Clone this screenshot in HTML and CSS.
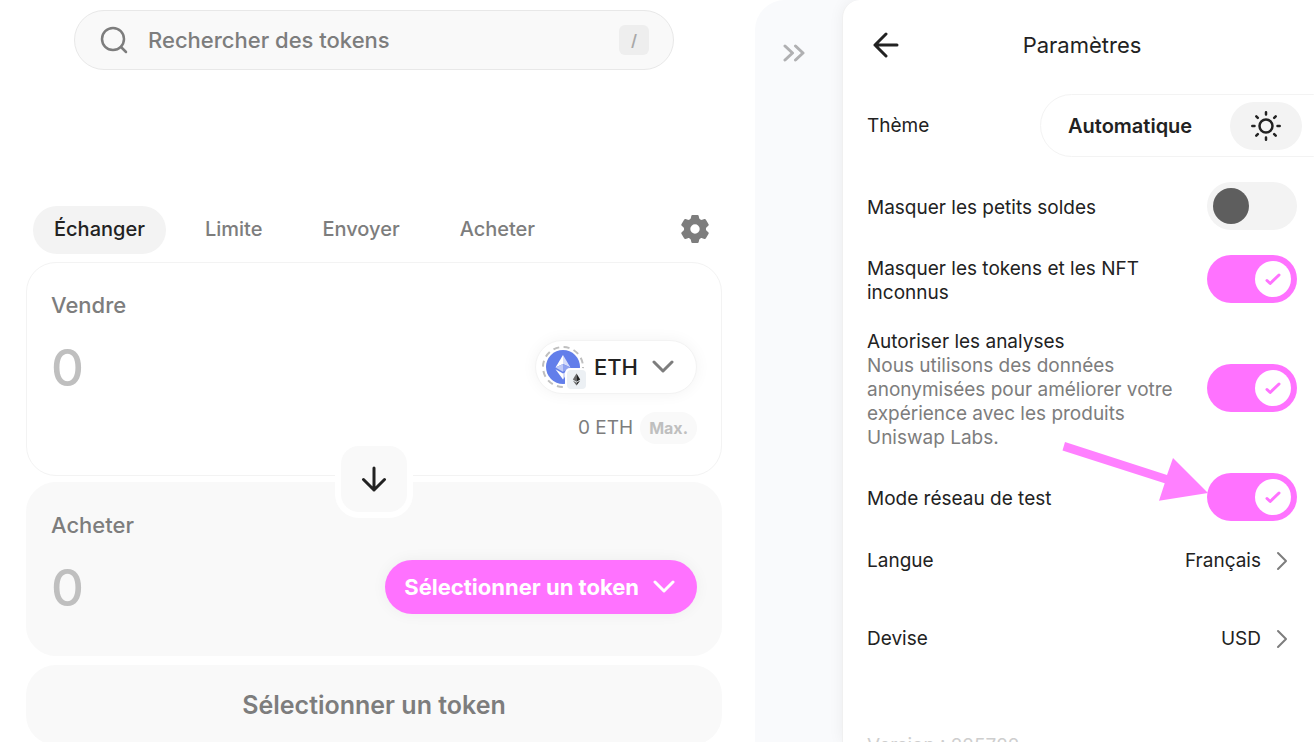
FILE: index.html
```html
<!DOCTYPE html>
<html lang="fr">
<head>
    <meta charset="UTF-8">
    <meta name="viewport" content="width=device-width, initial-scale=1.0">
    <title>Échanger</title>
    <link rel="stylesheet" href="styles.css">
</head>
<body>

    <main class="swap-page">
        <label class="search">
            <svg class="search-icon" width="28" height="28" viewBox="0 0 28 28" fill="none" stroke="#7d7d7d" stroke-width="2.500" stroke-linecap="round">
                <circle cx="13" cy="13" r="11"/>
                <path d="M21 21l5 5"/>
            </svg>
            <input type="text" placeholder="Rechercher des tokens" aria-label="Rechercher des tokens">
            <kbd>/</kbd>
        </label>

        <nav class="tabs">
            <button class="tab active">Échanger</button>
            <button class="tab">Limite</button>
            <button class="tab">Envoyer</button>
            <button class="tab">Acheter</button>
            <button class="gear" aria-label="Réglages">
                <svg width="28" height="28" viewBox="0 0 28 28">
                    <path fill="#7d7d7d" fill-rule="evenodd" d="M11.4 0h5.2c.6 0 1 .4 1.100 1l.5 2.300c.2.6.7 1 1.200 1.300.6.3 1.200.4 1.800.2l2.200-.7c.6-.2 1.200 0 1.500.6l2.700 4.600c.3.5.2 1.100-.3 1.500l-1.700 1.500c-.5.5-.7 1.100-.7 1.700s.2 1.200.7 1.700l1.700 1.500c.5.4.6 1 .3 1.500l-2.700 4.600c-.3.6-.9.8-1.500.6l-2.200-.7c-.6-.2-1.200-.1-1.800.2-.5.3-1 .7-1.200 1.300l-.5 2.300c-.1.6-.5 1-1.100 1h-5.200c-.6 0-1-.4-1.100-1l-.5-2.300c-.2-.6-.7-1-1.200-1.300-.6-.3-1.200-.4-1.800-.2l-2.200.7c-.6.2-1.200 0-1.500-.6L.400 18.700c-.3-.5-.2-1.100.3-1.500l1.700-1.500c.5-.5.7-1.100.7-1.700s-.2-1.200-.7-1.700L.700 10.800c-.5-.4-.6-1-.3-1.500l2.700-4.600c.3-.6.9-.8 1.500-.6l2.200.7c.6.2 1.200.1 1.800-.2.5-.3 1-.7 1.200-1.300l.5-2.300c.1-.6.5-1 1.100-1zM14 9.300a4.700 4.700 0 1 0 0 9.400 4.700 4.700 0 0 0 0-9.400z"/>
                </svg>
            </button>
        </nav>

        <section class="card sell">
            <label class="card-label" for="sell">Vendre</label>
            <div class="card-row">
                <input class="amount" id="sell" type="text" placeholder="0">
                <button class="token">
                    <svg width="48" height="48" viewBox="0 0 48 48">
                        <circle cx="24" cy="24" r="20" fill="none" stroke="#bfbfbf" stroke-width="2" stroke-dasharray="6 4.470"/>
                        <circle cx="24" cy="24" r="17" fill="#627eea"/>
                        <path fill="#fff" d="M24 12l-7.500 12.400L24 21z"/>
                        <path fill="#d5dcf9" d="M24 12l7.500 12.400L24 21z"/>
                        <path fill="#c0cbf7" d="M24 21l-7.500 3.400L24 28.800z"/>
                        <path fill="#90a3f0" d="M24 21l7.500 3.400L24 28.800z"/>
                        <path fill="#fff" d="M16.500 26.200L24 36.500v-6z"/>
                        <path fill="#d5dcf9" d="M31.500 26.200L24 36.500v-6z"/>
                        <rect x="26" y="25" width="22" height="22" rx="5" fill="#fff"/>
                        <rect x="28" y="27" width="19" height="19" rx="4" fill="#ecf0f4"/>
                        <path fill="#6b6b6b" d="M37.500 30.500l-3.700 6 3.700 2.200z"/>
                        <path fill="#222" d="M37.500 30.500l3.700 6-3.700 2.200z"/>
                        <path fill="#6b6b6b" d="M33.800 37.500l3.700 5v-2.800z"/>
                        <path fill="#222" d="M41.200 37.500l-3.700 5v-2.800z"/>
                    </svg>
                    <span>ETH</span>
                    <svg width="22" height="14" viewBox="0 0 22 14" fill="none" stroke="#7d7d7d" stroke-width="3" stroke-linecap="round" stroke-linejoin="round">
                        <path d="M2 2l9 9 9-9"/>
                    </svg>
                </button>
            </div>
            <div class="balance">
                <span>0 ETH</span>
                <button class="max">Max.</button>
            </div>
        </section>

        <div class="switch-row">
            <button class="switch" aria-label="Inverser">
                <svg width="26" height="26" viewBox="0 0 26 26" fill="none" stroke="#222" stroke-width="3" stroke-linecap="round" stroke-linejoin="round">
                    <path d="M13 2v22M2.500 13.500L13 24l10.500-10.500"/>
                </svg>
            </button>
        </div>

        <section class="card buy">
            <label class="card-label" for="buy">Acheter</label>
            <div class="card-row">
                <input class="amount" id="buy" type="text" placeholder="0">
                <button class="token pink">
                    <span>Sélectionner un token</span>
                    <svg width="22" height="14" viewBox="0 0 22 14" fill="none" stroke="#fff" stroke-width="3" stroke-linecap="round" stroke-linejoin="round">
                        <path d="M2 2l9 9 9-9"/>
                    </svg>
                </button>
            </div>
        </section>

        <button class="cta">Sélectionner un token</button>
    </main>

    <aside class="drawer">
        <button class="collapse" aria-label="Fermer">
            <svg width="22" height="18" viewBox="0 0 22 18" fill="none" stroke="#b0b0b2" stroke-width="3" stroke-linecap="round" stroke-linejoin="round">
                <path d="M2 2l7.500 7L2 16M12.500 2l7.500 7-7.500 7"/>
            </svg>
        </button>

        <div class="panel">
            <header class="panel-header">
                <button class="back" aria-label="Retour">
                    <svg width="26" height="26" viewBox="0 0 26 26" fill="none" stroke="#222" stroke-width="3" stroke-linecap="round" stroke-linejoin="round">
                        <path d="M24 13H2M13 2L2 13l11 11"/>
                    </svg>
                </button>
                <h1>Paramètres</h1>
            </header>

            <div class="settings">
                <div class="theme-row">
                    <span class="theme-label">Thème</span>
                    <div class="theme-switch">
                        <button class="auto">Automatique</button>
                        <button class="sun" aria-label="Clair">
                            <svg width="30" height="30" viewBox="0 0 30 30" fill="none" stroke="#222" stroke-width="2.500" stroke-linecap="round">
                                <circle cx="15" cy="15" r="6.500"/>
                                <path d="M15 1.300v2.200M15 26.500v2.200M1.300 15h2.200M26.500 15h2.200M5.300 5.300l1.500 1.500M23.200 23.200l1.500 1.500M5.300 24.700l1.500-1.500M23.200 6.800l1.500-1.500"/>
                            </svg>
                        </button>
                    </div>
                </div>

                <div class="row">
                    <label for="soldes">Masquer les petits soldes</label>
                    <span class="toggle">
                        <input type="checkbox" id="soldes">
                        <span class="knob"></span>
                    </span>
                </div>

                <div class="row">
                    <label for="inconnus">Masquer les tokens et les NFT inconnus</label>
                    <span class="toggle">
                        <input type="checkbox" id="inconnus" checked>
                        <span class="knob"><svg width="16" height="13" viewBox="0 0 16 13"><path d="M2 7.500l3.200 3L14 2"/></svg></span>
                    </span>
                </div>

                <div class="row">
                    <label for="analyses">Autoriser les analyses
                        <small>Nous utilisons des données anonymisées pour améliorer votre expérience avec les produits Uniswap Labs.</small>
                    </label>
                    <span class="toggle">
                        <input type="checkbox" id="analyses" checked>
                        <span class="knob"><svg width="16" height="13" viewBox="0 0 16 13"><path d="M2 7.500l3.200 3L14 2"/></svg></span>
                    </span>
                </div>

                <div class="row">
                    <label for="reseau">Mode réseau de test</label>
                    <span class="toggle">
                        <input type="checkbox" id="reseau" checked>
                        <span class="knob"><svg width="16" height="13" viewBox="0 0 16 13"><path d="M2 7.500l3.200 3L14 2"/></svg></span>
                    </span>
                    <!-- flèche vers le mode test -->
                    <svg class="pointer" width="148" height="62" viewBox="0 0 148 62">
                        <path fill="#ff80ff" d="M5 2l102 33 6-17 35 35-49 7.700 5.700-17.400L2.500 10.500z"/>
                    </svg>
                </div>

                <a class="link-row" href="#">
                    <span>Langue</span>
                    <span class="value">Français
                        <svg width="12" height="20" viewBox="0 0 12 20"><path d="M2 2l8 8-8 8"/></svg>
                    </span>
                </a>

                <a class="link-row last" href="#">
                    <span>Devise</span>
                    <span class="value">USD
                        <svg width="12" height="20" viewBox="0 0 12 20"><path d="M2 2l8 8-8 8"/></svg>
                    </span>
                </a>
            </div>

            <p class="version">Version : 225722</p>
        </div>
    </aside>

</body>
</html>
```
FILE: styles.css
```css
* {
    box-sizing: border-box;
}
body {
    margin: 0;
    display: flex;
    height: 100vh;
    overflow: hidden;
    font-family: Inter, "Liberation Sans", sans-serif;
    font-size: 19px;
    line-height: 24px;
    color: #222;
    background-color: #fff;
}
button, input {
    font-family: inherit;
    font-size: inherit;
    line-height: inherit;
    color: inherit;
    border: none;
    background: none;
    padding: 0;
    margin: 0;
}
button {
    cursor: pointer;
}
svg {
    display: block;
    flex: none;
}

/* colonne de gauche */
.swap-page {
    flex: 1;
    min-width: 0;
    padding: 10px 33px 0 26px;
}
.search {
    display: flex;
    align-items: center;
    gap: 20px;
    max-width: 600px;
    height: 60px;
    margin: 0 auto 136px;
    padding: 0 24px 0 25px;
    border: 1px solid #e8e8e8;
    border-radius: 30px;
    background-color: #f9f9f9;
}
.search input {
    flex: 1;
    min-width: 0;
    font-size: 22px;
    font-weight: 500;
    outline: none;
}
.search input::placeholder {
    color: #7d7d7d;
    opacity: 1;
}
.search kbd {
    width: 30px;
    height: 30px;
    border-radius: 6px;
    background-color: #eee;
    color: #a8a8a8;
    font-family: inherit;
    font-size: 16px;
    font-weight: 600;
    line-height: 30px;
    text-align: center;
}
.tabs {
    display: flex;
    align-items: center;
    height: 48px;
    margin: 0 13px 8px 7px;
}
.tab {
    height: 48px;
    padding: 0 21px 2px;
    margin-right: 18px;
    border-radius: 24px;
    font-size: 20px;
    font-weight: 500;
    color: #7d7d7d;
}
.tab.active {
    background-color: #f3f3f3;
    color: #222;
}
.gear {
    margin-left: auto;
    padding-bottom: 2px;
}
.card {
    border: 1px solid #f3f3f3;
    border-radius: 30px;
    padding: 28px 24px 31px;
}
.card-label {
    display: block;
    font-size: 22px;
    font-weight: 500;
    line-height: 28px;
    color: #7d7d7d;
}
.card-row {
    display: flex;
    align-items: center;
    justify-content: space-between;
    margin-top: 21px;
}
.amount {
    flex: 1;
    min-width: 0;
    height: 54px;
    font-size: 51px;
    font-weight: 500;
    outline: none;
}
.amount::placeholder {
    color: #bfbfbf;
    opacity: 1;
}
.token {
    display: flex;
    align-items: center;
    height: 54px;
    padding: 0 22px 0 3px;
    border: 1px solid #f3f3f3;
    border-radius: 27px;
    background-color: #fff;
    box-shadow: 0 0 15px rgba(0, 0, 0, 0.05);
    font-size: 22px;
    font-weight: 500;
}
.token span {
    margin: 0 14px 0 7px;
}
.token.pink {
    border: none;
    background-color: #ff72ff;
    color: #fff;
    font-weight: 700;
    padding-left: 12px;
}
.balance {
    display: flex;
    align-items: center;
    justify-content: flex-end;
    gap: 7px;
    height: 32px;
    margin-top: 18px;
    color: #7d7d7d;
}
.max {
    height: 32px;
    padding: 0 9px;
    border-radius: 16px;
    background-color: #f9f9f9;
    font-size: 16px;
    font-weight: 700;
    color: #bfbfbf;
}
.switch-row {
    display: flex;
    align-items: center;
    justify-content: center;
    height: 6px;
}
.switch {
    position: relative;
    z-index: 1;
    flex: none;
    display: grid;
    place-items: center;
    width: 78px;
    height: 78px;
    border: 6px solid #fff;
    border-radius: 24px;
    background-color: #f9f9f9;
}
.buy {
    border-color: #f9f9f9;
    background-color: #f9f9f9;
    padding-bottom: 41px;
}
.cta {
    display: block;
    width: 100%;
    height: 80px;
    margin-top: 9px;
    border-radius: 30px;
    background-color: #f9f9f9;
    color: #7d7d7d;
    font-size: 25px;
    font-weight: 600;
}

/* volet des paramètres */
.drawer {
    flex: none;
    display: flex;
    align-items: flex-start;
    width: 559px;
    height: 100vh;
    border-radius: 30px 0 0 0;
    background-color: #f9fafc;
}
.collapse {
    flex: none;
    padding: 44px 37px 0 28px;
}
.panel {
    flex: 1;
    height: 100vh;
    overflow: hidden;
    padding: 0 17px 0 24px;
    border-left: 1px solid #f0f0f0;
    border-radius: 18px 0 0 0;
    background-color: #fff;
    box-shadow: 0 0 15px rgba(0, 0, 0, 0.06);
}
.panel-header {
    display: grid;
    grid-template-columns: 36px 1fr 36px;
    align-items: center;
    height: 90px;
    margin-bottom: 4px;
}
.back {
    padding-left: 6px;
}
h1 {
    margin: 0;
    font-size: 22px;
    font-weight: 400;
    text-align: center;
}
.settings {
    display: flex;
    flex-direction: column;
    gap: 25px;
}
.theme-row {
    display: flex;
    align-items: center;
}
.theme-label {
    width: 173px;
}
.theme-switch {
    flex: 1;
    display: flex;
    align-items: center;
    justify-content: space-between;
    height: 63px;
    margin-right: -48px;
    padding: 0 42px 0 27px;
    border: 1px solid #f3f3f3;
    border-radius: 32px;
}
.auto {
    font-size: 20px;
    font-weight: 600;
}
.sun {
    display: grid;
    place-items: center;
    width: 72px;
    height: 48px;
    border-radius: 24px;
    background-color: #f3f3f3;
}
.row {
    position: relative;
    display: flex;
    align-items: center;
    justify-content: space-between;
    gap: 24px;
}
.row label {
    padding-top: 2px;
    margin-bottom: -2px;
}
.row small {
    display: block;
    font-size: 19px;
    color: #7d7d7d;
}
.toggle {
    position: relative;
    flex: none;
    width: 90px;
    height: 48px;
}
.toggle input {
    display: block;
    appearance: none;
    width: 90px;
    height: 48px;
    border-radius: 24px;
    background-color: #f3f3f3;
    cursor: pointer;
}
.toggle input:checked {
    background-color: #ff72ff;
}
.knob {
    position: absolute;
    top: 6px;
    left: 6px;
    display: grid;
    place-items: center;
    width: 36px;
    height: 36px;
    border-radius: 50%;
    background-color: #5e5e5e;
    pointer-events: none;
}
.toggle input:checked + .knob {
    left: 48px;
    background-color: #fff;
}
.knob path {
    fill: none;
    stroke: #ff72ff;
    stroke-width: 3;
    stroke-linecap: round;
    stroke-linejoin: round;
}
.pointer {
    position: absolute;
    left: 193px;
    top: -33px;
}
.link-row {
    display: flex;
    align-items: center;
    justify-content: space-between;
    height: 30px;
    color: inherit;
    text-decoration: none;
}
.link-row.last {
    margin-top: 23px;
}
.value {
    display: flex;
    align-items: center;
    gap: 15px;
    padding-right: 9px;
}
.value path {
    fill: none;
    stroke: #7d7d7d;
    stroke-width: 2;
    stroke-linecap: round;
    stroke-linejoin: round;
}
.version {
    margin: 80px 0 0;
    color: #cecece;
}
```
